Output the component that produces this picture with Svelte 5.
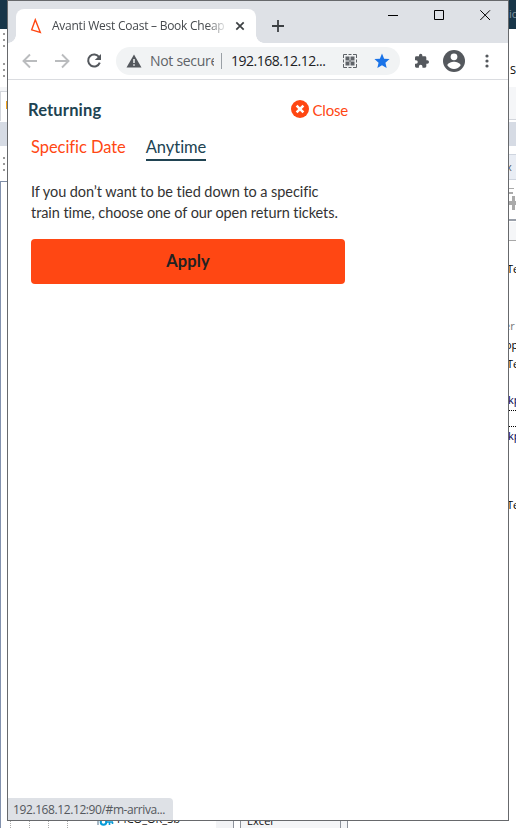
<script>
  const fragments = [
    { text: 'ic', x: 509, y: 7, color: '#8295a0' },
    { text: 'S', x: 510, y: 63, color: '#000' },
    { text: 'x', x: 506, y: 160, color: '#555b66' },
    { text: 'Te', x: 507, y: 262, color: '#000' },
    { text: 'er', x: 504, y: 319, color: '#777' },
    { text: 'op', x: 505, y: 338, color: '#000' },
    { text: 'Te', x: 507, y: 357, color: '#000' },
    { text: 'kp', x: 508, y: 393, color: '#000050' },
    { text: 'kp', x: 508, y: 429, color: '#000050' },
    { text: 'Te', x: 507, y: 498, color: '#000' },
    { text: 'PICO_OR_Sb', x: 117, y: 812, color: '#111' },
    { text: 'Excel', x: 247, y: 814, color: '#111' },
  ];
  const bands = [
    [0, 0, 7, 29, '#183649'], [509, 0, 7, 29, '#183649'],
    [0, 87, 7, 5, '#f4f5f7'], [0, 91, 7, 1, '#d3d6dc'], [0, 92, 1, 29, '#d3d6dc'], [6, 101, 1, 8, '#f3a51e'],
    [0, 122, 7, 24, '#d6dbe4'], [0, 181, 7, 1, '#7f8da6'], [0, 181, 1, 647, '#8291ad'],
    [509, 87, 7, 32, '#f5f6f8'], [509, 119, 7, 1, '#d3d6dc'], [509, 122, 7, 24, '#d6dbe4'],
    [509, 154, 7, 26, '#e9edf4'], [509, 154, 7, 1, '#cfd5df'], [509, 179, 7, 1, '#cfd5df'],
    [509, 188, 5, 1, '#aaa'], [509, 192, 4, 2, '#aaa'], [509, 201, 7, 4, '#aaa'], [512, 196, 3, 14, '#aaa'],
    [509, 219, 7, 2, '#9aa0aa'], [509, 222, 7, 18, '#f5f6f8'], [509, 240, 7, 1, '#a8a8a8'],
    [216, 821, 18, 7, '#f2f3f5'], [233, 821, 1, 7, '#8d929b'], [240, 821, 1, 7, '#8d929b'],
    [241, 821, 99, 7, '#f4f5f7'], [340, 821, 1, 7, '#8d929b'], [341, 821, 6, 7, '#f4f5f7'], [347, 821, 1, 7, '#8d929b'],
  ];
  const grips = [33, 39, 45, 63, 69, 75, 157, 163, 169];
  const guides = [10, 29, 48, 67];
</script>

<div class="desktop">
  <svg class="backdrop" width="516" height="828" viewBox="0 0 516 828" shape-rendering="crispEdges">
    <rect width="516" height="828" fill="#fff" />
    {#each bands as [x, y, w, h, color]}
      <rect {x} {y} width={w} height={h} fill={color} />
    {/each}
    {#each grips as y}
      <rect x="3" {y} width="2" height="2" fill="#999" />
    {/each}
    {#each guides as x}
      <path d="M{x + 0.5} 821v7" stroke="#aaa" stroke-dasharray="1 1" />
    {/each}
    <path d="M509 410.5h7M509 426.5h7" stroke="#000" stroke-dasharray="1 1" />
    <g fill="none" stroke="#079bd7" stroke-width="2" shape-rendering="auto">
      <path d="M98 820v5" stroke="#52738a" stroke-width="1" /><circle cx="103.500" cy="822" r="2.800" /><path d="M106 822h7M109.500 822v3M112.500 822v2" stroke-width="1.600" />
    </g>
  </svg>
  {#each fragments as f}
    <span class="fragment" style="left:{f.x}px;top:{f.y}px;color:{f.color}">{f.text}</span>
  {/each}

  <div class="window">
    <header class="strip">
      <div class="tab">
        <svg class="logo" width="12" height="16" viewBox="0 0 12 16"><path d="M5.300 1.800L1.700 11.800L10.300 14.500z" fill="none" stroke="#ff4713" stroke-width="1.400" /></svg>
        <span class="title">Avanti West Coast – Book Cheap</span>
        <svg class="tabclose" width="10" height="10" viewBox="0 0 10 10"><path d="M1.300 1.300l7.400 7.400M8.700 1.300l-7.400 7.400" stroke="#3c4043" stroke-width="1.700" /></svg>
      </div>
      <svg class="plus" width="12" height="12" viewBox="0 0 12 12"><path d="M6 0v12M0 6h12" stroke="#3c4043" stroke-width="1.800" /></svg>
      <div class="controls">
        <svg width="11" height="11" viewBox="0 0 11 11"><path d="M0 5.500h10" stroke="#000" /></svg>
        <svg width="11" height="11" viewBox="0 0 11 11"><path d="M.5.5h9v9h-9z" fill="none" stroke="#000" /></svg>
        <svg width="11" height="11" viewBox="0 0 11 11"><path d="M.3.3l9.700 9.700M10 .3l-9.700 9.700" stroke="#000" /></svg>
      </div>
    </header>

    <div class="toolbar">
      <div class="nav">
        <svg width="16" height="16" viewBox="0 0 16 16"><path d="M15 8H2M8 1.500L1.500 8L8 14.500" fill="none" stroke="#babcbe" stroke-width="1.900" /></svg>
        <svg width="16" height="16" viewBox="0 0 16 16"><path d="M1 8h13M8 1.500L14.500 8L8 14.500" fill="none" stroke="#babcbe" stroke-width="1.900" /></svg>
        <svg width="16" height="16" viewBox="0 0 16 16"><path d="M13.200 4.200A6 6 0 1 0 13.800 9.600" fill="none" stroke="#54585d" stroke-width="2" /><path d="M15 .9v6.200H8.800z" fill="#54585d" /></svg>
      </div>
      <div class="omnibox">
        <svg class="warn" width="16" height="14" viewBox="0 0 16 14"><path d="M8 .5L15.500 13.500H.5z" fill="#54585d" /><path d="M8 5v4M8 10.200v1.600" stroke="#f1f3f4" stroke-width="1.500" /></svg>
        <span class="secure">Not secure</span>
        <i class="divider"></i>
        <span class="url">192.168.12.12...</span>
        <svg class="qr" width="14" height="14" viewBox="0 0 14 14"><path d="M.5 4V.5H4M10 .5h3.500V4M13.500 10v3.500H10M4 13.500H.5V10M5.500.5h3M5.500 13.500h3M.5 5.500v3M13.500 5.500v3" fill="none" stroke="#5f6368" /><path d="M2.500 2.500h4v4h-4zM7.500 2.500h4v4h-4zM2.500 7.500h4v4h-4zM7.500 7.500h4v4h-4z" fill="#5f6368" /><path d="M6 7h2M7 6v2" stroke="#777b7f" /></svg>
        <svg class="star" width="16" height="16" viewBox="0 0 24 24"><path d="M12 18.300l7 4.200-1.850-8 6.200-5.350-8.150-.7L12 .9 8.800 8.450l-8.150.7 6.200 5.350L5 22.500z" fill="#1a73e8" /></svg>
      </div>
      <svg class="ext" width="16" height="16" viewBox="1 0 23 24"><path d="M20.500 11H19V7a2 2 0 0 0-2-2h-4V3.500a2.500 2.500 0 0 0-5 0V5H4a2 2 0 0 0-2 2v3.800h1.500a2.700 2.700 0 0 1 0 5.400H2V20a2 2 0 0 0 2 2h3.800v-1.500a2.700 2.700 0 0 1 5.400 0V22H17a2 2 0 0 0 2-2v-4h1.500a2.500 2.500 0 0 0 0-5z" fill="#54585d" /></svg>
      <svg class="avatar" width="22" height="22" viewBox="0 0 22 22"><circle cx="11" cy="11" r="11" fill="#54585d" /><circle cx="11" cy="6.800" r="3.400" fill="#fff" /><path d="M4.300 15.300c.3-2.300 4.400-3.500 6.700-3.500s6.400 1.200 6.700 3.500a8 8 0 0 1-13.400 0z" fill="#fff" /></svg>
      <svg class="menu" width="4" height="14" viewBox="0 0 4 14" fill="#54585d"><circle cx="2" cy="2" r="1.600" /><circle cx="2" cy="7" r="1.600" /><circle cx="2" cy="12" r="1.600" /></svg>
    </div>

    <main>
      <div class="heading">
        <h1>Returning</h1>
        <a class="close" href="#close">
          <svg width="18" height="18" viewBox="0 0 18 18"><circle cx="9" cy="9" r="9" fill="#ff4713" /><path d="M5.600 5.600l6.800 6.800M12.400 5.600l-6.800 6.800" stroke="#fff" stroke-width="2.500" /></svg>
          <span>Close</span>
        </a>
      </div>
      <nav class="choices"><a class="date" href="#date">Specific Date</a><a class="any" href="#anytime">Anytime</a></nav>
      <p>If you don’t want to be tied down to a specific<br />train time, choose one of our open return tickets.</p>
      <button>Apply</button>
    </main>
    <footer>192.168.12.12:90/#m-arriva...</footer>
  </div>
</div>

<style>
  :global(body) { margin: 0; overflow: hidden; }
  .desktop { position: relative; width: 516px; height: 828px; overflow: hidden; background: #fff; font-family: "Open Sans", "Noto Sans", sans-serif; }
  .backdrop { position: absolute; left: 0; top: 0; }
  .fragment { position: absolute; font-size: 11px; line-height: 14px; white-space: nowrap; }
  .window { position: absolute; left: 7px; top: 0; width: 502px; height: 821px; box-sizing: border-box; border: 1px solid #67696c; background: #fff; display: flex; flex-direction: column; }
  svg { display: block; flex: none; }
  .strip { height: 42px; background: #dee1e6; display: flex; flex: none; padding-left: 8px; }
  .tab { position: relative; width: 240px; height: 34px; margin-top: 8px; background: #fff; border-radius: 8px 8px 0 0; display: flex; align-items: center; box-sizing: border-box; padding-left: 14px; flex: none; }
  .tab::before, .tab::after { content: ""; position: absolute; bottom: 0; width: 8px; height: 8px; }
  .tab::before { left: -8px; background: radial-gradient(circle at 0 0, transparent 7.500px, #fff 8px); }
  .tab::after { right: -8px; background: radial-gradient(circle at 100% 0, transparent 7.500px, #fff 8px); }
  .title { width: 173px; margin-left: 10px; font-size: 12px; line-height: 16px; letter-spacing: -.25px; white-space: nowrap; overflow: hidden; color: #45494d; -webkit-mask-image: linear-gradient(90deg, #000 155px, transparent 176px); mask-image: linear-gradient(90deg, #000 155px, transparent 176px); }
  .tabclose { margin-left: 10px; }
  .plus { margin: 19px 0 0 16px; }
  .controls { display: flex; gap: 35px; margin: 9px 0 0 104px; }
  .toolbar { height: 37px; box-sizing: border-box; border-bottom: 1px solid #dadce0; display: flex; align-items: center; flex: none; padding-left: 14px; }
  .nav { display: flex; gap: 16px; }
  .omnibox { width: 284px; height: 28px; margin-left: 14px; box-sizing: border-box; padding-left: 10px; border-radius: 14px; background: #f1f3f4; display: flex; align-items: center; font-size: 14px; line-height: 20px; white-space: nowrap; }
  .secure { width: 64px; margin-left: 8px; overflow: hidden; color: #5f6368; letter-spacing: -.3px; }
  .divider { width: 1px; height: 16px; margin-left: 7px; background: #9aa0a6; }
  .url { width: 96px; margin-left: 9px; color: #202124; letter-spacing: -.48px; }
  .qr { margin-left: 16px; }
  .star { margin-left: 17px; }
  .ext { margin-left: 14px; }
  .avatar { margin-left: 13px; }
  .menu { margin-left: 20px; }
  main { flex: 1; font-family: Lato, sans-serif; font-variant-ligatures: none; padding: 19px 0 0 20px; }
  .heading { display: flex; justify-content: space-between; width: 320px; height: 22px; }
  h1 { margin: 0; font-size: 16.500px; line-height: 22px; color: #204352; font-weight: 700; letter-spacing: .15px; }
  a { text-decoration: none; color: #ff4713; }
  .close { display: flex; gap: 4px; font-size: 15px; line-height: 22px; letter-spacing: -.2px; }
  .close svg { margin-top: 1px; }
  .choices { display: flex; gap: 20px; margin: 15px 0 0 3px; font-size: 16.500px; line-height: 22px; height: 25px; letter-spacing: -.05px; }
  .any { color: #204352; border-bottom: 2px solid #204352; height: 23px; }
  p { margin: 20px 0 0 3px; font-size: 14.500px; line-height: 21px; color: #333; white-space: nowrap; letter-spacing: -.07px; }
  button { display: block; width: 314px; height: 45px; margin: 16px 0 0 3px; padding: 0 0 2px; border: 0; border-radius: 4px; background: #ff4713; color: #222; font: 700 16.500px/22px Lato, sans-serif; letter-spacing: .15px; }
  footer { width: 165px; height: 22px; box-sizing: border-box; padding-left: 5px; border-radius: 0 4px 0 0; background: #dee1e6; color: #54585d; font-size: 12px; line-height: 23px; letter-spacing: -.4px; white-space: nowrap; }
</style>
